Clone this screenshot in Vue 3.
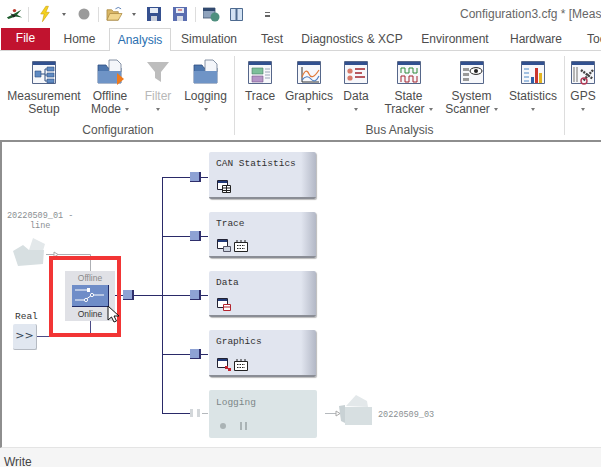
<template>
  <div class="app">
    <!-- quick access -->
    <div class="quick">
      <svg class="q" style="margin-left:6px" width="17" height="14" viewBox="0 0 20 16"><path d="M1 12 L9 8 L18 3 L13 9 L19 12 L11 11 L3 14Z" fill="#1d5c2c"/><path d="M5 7 L12 10 L9 12Z" fill="#222"/><circle cx="10" cy="4" r="2" fill="#b8372c"/></svg>
      <i class="sep" style="margin-left:5px"></i>
      <svg class="q" style="margin-left:10px" width="12" height="18" viewBox="0 0 14 20"><path d="M8 1 L2 10 H6 L4 19 L12 8 H8 L11 1Z" fill="#f5d21f" stroke="#c9a010" stroke-width=".7"/></svg>
      <i class="caret" style="margin-left:11px"></i>
      <svg class="q" style="margin-left:12px" width="12" height="12" viewBox="0 0 12 12"><circle cx="6" cy="6" r="5.5" fill="#9b9b9b"/></svg>
      <i class="sep" style="margin-left:8px"></i>
      <svg class="q" style="margin-left:7px" width="17" height="16" viewBox="0 0 18 17"><path d="M1 15 V4 H6 L8 6 H13 V15Z" fill="#d9b766" stroke="#a8873d" stroke-width=".8"/><path d="M1 15 L4 8 H17 L13 15Z" fill="#f1d68d" stroke="#a8873d" stroke-width=".8"/><path d="M10 3 Q13 0 16 3" fill="none" stroke="#5b7fb5"/></svg>
      <i class="caret" style="margin-left:9px"></i>
      <svg class="q" style="margin-left:11px" width="14" height="14" viewBox="0 0 14 14"><path d="M0 0 H14 V14 H0Z" fill="#35508f"/><path d="M3 1 H11 V6 H3Z" fill="#e6ecf5"/><path d="M4 9 H10 V14 H4Z" fill="#c9cfdc"/></svg>
      <svg class="q" style="margin-left:12px" width="14" height="14" viewBox="0 0 14 14"><path d="M0 0 H14 V14 H0Z" fill="#5a6db0"/><path d="M3 1 H11 V6 H3Z" fill="#e6ecf5"/><path d="M4 9 H10 V14 H4Z" fill="#d8dce6"/><path d="M5 3 H9" stroke="#c33"/></svg>
      <i class="sep" style="margin-left:8px"></i>
      <svg class="q" style="margin-left:7px" width="17" height="16" viewBox="0 0 17 16"><path d="M0 2 H12 V12 H0Z" fill="#8fa3bd" stroke="#3f5370" stroke-width=".8"/><path d="M0 2 H12 V5 H0Z" fill="#31496f"/><circle cx="12" cy="11" r="4.5" fill="#4f8f7f"/></svg>
      <svg class="q" style="margin-left:10px" width="13" height="13" viewBox="0 0 13 13"><path d="M.5 .5 H12.5 V12.5 H.5Z" fill="#d3e2f3" stroke="#4d6a8f"/><path d="M6.5 .5 V12.5" stroke="#4d6a8f" stroke-width="2"/></svg>
      <i class="more"></i>
      <span class="title">Configuration3.cfg * [Measu</span>
    </div>

    <!-- tabs -->
    <div class="tabs">
      <span class="file">File</span>
      <span
        v-for="tab in tabs"
        :key="tab.name"
        class="tab"
        :class="{ active: tab.active }"
        :style="{ width: tab.w + 'px' }"
      >{{ tab.name }}</span>
    </div>

    <!-- ribbon -->
    <div class="ribbon">
      <div v-for="group in groups" :key="group.name" class="group" :style="{ width: group.w + 'px' }">
        <div class="items">
          <div
            v-for="item in group.items"
            :key="item.label"
            class="item"
            :class="{ off: item.off }"
            :style="{ width: item.w + 'px' }"
          >
            <svg class="ricon" width="28" height="26" viewBox="0 0 28 26">
              <template v-if="item.icon === 'folder'">
                <path d="M2 6 H10 L12 9 H25 V24 H2Z" fill="#4d76ad" stroke="#2f4f80" stroke-width=".8"/>
                <path d="M13 1 H21 L25 5 V13 H13Z" fill="#f4f6fa" stroke="#6a7a90" stroke-width=".8"/>
                <path d="M2 12 H25 V24 H2Z" fill="#6f94c6"/>
                <path v-if="item.play" d="M21 14 L28 20 L21 26Z" fill="#ef7a1c"/>
              </template>
              <path v-else-if="item.icon === 'filter'" d="M3 3 H25 L17 13 V23 L11 19 V13Z" fill="#bdbdbd"/>
              <template v-else>
                <path d="M2.5 2.5 H25.5 V24.5 H2.5Z" fill="#f7f8fb" stroke="#56678a"/>
                <path d="M3 3 H25 V6 H3Z" fill="#31508f"/>
                <template v-if="item.icon === 'tree'">
                  <path d="M5 12 H11 V18 H5Z M17 8 H24 V12 H17Z M17 14 H24 V18 H17Z M17 20 H24 V24 H17Z" fill="#5f8ac2" stroke="#2f4f80" stroke-width=".6"/>
                  <path d="M11 15 H15 M15 10 V22 M15 10 H17 M15 16 H17 M15 22 H17" stroke="#2f4f80" fill="none"/>
                </template>
                <template v-else-if="item.icon === 'trace'">
                  <path d="M6 9 H17 V15 H6Z" fill="#7dbf9a" stroke="#4c7f68" stroke-width=".6"/>
                  <path d="M6 17 H17 V23 H6Z" fill="#b595c7" stroke="#75588a" stroke-width=".6"/>
                  <path d="M19 10 H24 M19 13 H24 M19 16 H24 M19 19 H24" stroke="#9aa5b8"/>
                </template>
                <template v-else-if="item.icon === 'graph'">
                  <path d="M7 8 V23 H24" stroke="#333" fill="none"/>
                  <path d="M7 18 Q11 8 14 15 T24 11" stroke="#e07a3a" fill="none" stroke-width="1.2"/>
                  <path d="M7 21 Q12 15 16 20 T24 17" stroke="#4f7fc0" fill="none" stroke-width="1.2"/>
                </template>
                <template v-else-if="item.icon === 'data'">
                  <circle cx="8" cy="12" r="2.6" fill="#d77a6a"/>
                  <circle cx="8" cy="19" r="2.6" fill="#d77a6a"/>
                  <path d="M13 10 H23 M13 14 H20 M13 18 H23" stroke="#a3242e" stroke-width="1.4"/>
                </template>
                <template v-else-if="item.icon === 'state'">
                  <path d="M6 14 V9 H10 V14 H14 V9 H18 V14 H22 V9" stroke="#2f8a3a" fill="none"/>
                  <path d="M6 23 V17 H10 V23 H14 V17 H18 V23 H22 V17" stroke="#a3242e" fill="none"/>
                </template>
                <template v-else-if="item.icon === 'scan'">
                  <path d="M5 9 H11 V12 H5Z M5 14 H11 V17 H5Z M5 19 H11 V22 H5Z" fill="#9a9a9a"/>
                  <ellipse cx="18" cy="12" rx="6" ry="3.4" fill="#fff" stroke="#222"/>
                  <circle cx="18" cy="12" r="2" fill="#222"/>
                </template>
                <template v-else-if="item.icon === 'stats'">
                  <path d="M5 10 H10 M5 14 H10 M5 18 H10 M5 22 H10" stroke="#4f8ac9"/>
                  <path d="M12 18 H15 V24 H12Z" fill="#2e5fa8"/>
                  <path d="M16 9 H19 V24 H16Z" fill="#c9352e"/>
                  <path d="M20 14 H23 V24 H20Z" fill="#e2b321"/>
                </template>
                <template v-else>
                  <path d="M5 8 V23 M8 8 V23" stroke="#b5b5b5" stroke-width="2"/>
                  <path d="M12 11 L24 20 M24 11 L14 22" stroke="#444" stroke-width="2.4" stroke-dasharray="2 1"/>
                  <circle cx="15" cy="22" r="3" fill="none" stroke="#b33a55" stroke-width="1.4"/>
                </template>
              </template>
            </svg>
            <span v-for="(line, i) in item.lines" :key="line" class="lab">
              {{ line }}<i v-if="item.inline && i === item.lines.length - 1" class="mini inl"></i>
            </span>
            <i v-if="item.drop" class="mini"></i>
          </div>
        </div>
        <div class="gname">{{ group.name }}</div>
      </div>
    </div>

    <!-- measurement setup -->
    <div class="canvas">
      <svg class="wires" width="601" height="308" viewBox="0 140 601 308">
        <path d="M162.5 177 V413.5" stroke="#2a2a68" fill="none"/>
        <path d="M162 177.5 H208 M162 236.5 H208 M162 295.5 H208 M162 354.5 H208 M115 295.5 H162" stroke="#2a2a68" fill="none"/>
        <path d="M162 413.5 H190" stroke="#2a2a68" fill="none"/>
        <path d="M200 413.5 H208 M325 413.5 H340" stroke="#b5b9bd" fill="none"/>
        <path d="M46 254.5 H90.5 V271" stroke="#aeb0b4" fill="none"/>
        <path d="M54 252 L58 254.5 L54 257Z" fill="#fff" stroke="#aaa"/>
        <path d="M35 336.5 H90.5 V320" stroke="#4c4c86" fill="none"/>
        <path d="M336 411 L340 413.5 L336 416Z" fill="#fff" stroke="#aaa"/>
      </svg>

      <div v-for="y in [172, 231, 290, 349]" :key="y" class="port" :style="{ top: (y - 142) + 'px' }"></div>
      <div class="port main"></div>
      <div class="port-off"><b></b><b></b></div>

      <div v-for="node in nodes" :key="node.name" class="node" :style="{ top: (node.y - 142) + 'px', height: node.h + 'px' }">
        <div class="nname">{{ node.name }}</div>
        <div class="nicons">
          <svg v-for="(ic, i) in node.icons" :key="i" width="14" height="13" viewBox="0 0 14 13">
            <template v-if="ic === 'kbd'">
              <path d="M.5 3.5 H13.5 V12.5 H.5Z M3 1 V3 M7 1 V3 M11 1 V3" fill="#fff" stroke="#222"/>
              <path d="M3 6.5 H11 M3 9.5 H11" stroke="#222" stroke-dasharray="1.5 1"/>
            </template>
            <template v-else>
              <path d="M.5 .5 H10.5 V9.5 H.5Z" fill="#fff" stroke="#223"/>
              <path d="M1 1 H10 V3 H1Z" fill="#223a78"/>
              <path v-if="ic === 'table'" d="M5.5 5.5 H13.5 V12.5 H5.5Z M5.5 8 H13.5 M5.5 10.5 H13.5 M9.5 5.5 V12.5" fill="#fff" stroke="#222"/>
              <path v-else-if="ic === 'win'" d="M6.5 7.5 H13.5 V12.5 H6.5Z" fill="#cfd6e2" stroke="#556"/>
              <path v-else-if="ic === 'red'" d="M6.5 6.5 H13.5 V12.5 H6.5Z M6.5 9 H13.5" fill="#fff" stroke="#b3242e"/>
              <path v-else d="M8 8 H11 V11 H8Z M11 10 H14 V13 H11Z" fill="#c3242e"/>
            </template>
          </svg>
        </div>
      </div>

      <div class="node logging">
        <div class="nname">Logging</div>
        <div class="lctl"><i class="dot"></i><i class="pause"></i></div>
      </div>

      <div class="fname fleft">20220509_01 -<br /><span>line</span></div>
      <svg class="folder f1" width="34" height="30" viewBox="0 0 34 30"><path d="M16 12 L20 0 L32 6 L29 16Z" fill="#e3e8ea"/><path d="M0 13 L10 7 L16 12 H31 L30 26 L5 28Z" fill="#d7dfe1"/></svg>
      <svg class="folder f2" width="34" height="30" viewBox="0 0 34 30"><path d="M7 11 L17 0 L28 6 L29 12Z" fill="#e3e8ea"/><path d="M0 11 L6 10 V28 L2 26Z" fill="#c9d2d5"/><path d="M6 12 H33 V30 H6Z" fill="#d7dfe1"/></svg>
      <div class="fname fright">20220509_03</div>

      <div class="real">Real</div>
      <div class="realbox">&gt;&gt;</div>

      <div class="switch">
        <span class="sw-t off">Offline</span>
        <div class="sw-blue">
          <svg width="36" height="21" viewBox="0 0 36 21">
            <path d="M3 5 H15" stroke="#fff"/><path d="M15 3 H18 V7 H15Z" fill="#fff"/>
            <path d="M3 15 H13 L20 10 H32" stroke="#fff" fill="none"/>
            <circle cx="20" cy="10" r="1.6" fill="#5f7fbd" stroke="#fff"/><circle cx="14" cy="15" r="1.6" fill="#5f7fbd" stroke="#fff"/>
          </svg>
        </div>
        <span class="sw-t">Online</span>
      </div>
      <div class="redbox"></div>
      <svg class="cursor" width="13" height="18" viewBox="0 0 13 18"><path d="M1 1 V15 L4.5 12 L7 17 L9.5 16 L7 11 L12 11Z" fill="#fff" stroke="#111"/></svg>
    </div>

    <div class="status">Write</div>
  </div>
</template>

<script setup>
const tabs = [
  { name: 'Home', w: 59 },
  { name: 'Analysis', w: 62, active: true },
  { name: 'Simulation', w: 76 },
  { name: 'Test', w: 50 },
  { name: 'Diagnostics & XCP', w: 110 },
  { name: 'Environment', w: 96 },
  { name: 'Hardware', w: 66 },
  { name: 'Tools', w: 64 }
]

const groups = [
  {
    name: 'Configuration',
    w: 233,
    items: [
      { label: 'Measurement', lines: ['Measurement', 'Setup'], icon: 'tree', w: 84 },
      { label: 'Offline', lines: ['Offline', 'Mode'], inline: true, icon: 'folder', play: true, w: 48 },
      { label: 'Filter', lines: ['Filter'], icon: 'filter', off: true, drop: true, w: 48 },
      { label: 'Logging', lines: ['Logging'], icon: 'folder', drop: true, w: 47 }
    ]
  },
  {
    name: 'Bus Analysis',
    w: 330,
    items: [
      { label: 'Trace', lines: ['Trace'], icon: 'trace', drop: true, w: 50 },
      { label: 'Graphics', lines: ['Graphics'], icon: 'graph', drop: true, w: 48 },
      { label: 'Data', lines: ['Data'], icon: 'data', drop: true, w: 46 },
      { label: 'State', lines: ['State', 'Tracker'], inline: true, icon: 'state', w: 59 },
      { label: 'System', lines: ['System', 'Scanner'], inline: true, icon: 'scan', w: 67 },
      { label: 'Statistics', lines: ['Statistics'], icon: 'stats', drop: true, w: 56 }
    ]
  },
  {
    name: '',
    w: 36,
    items: [{ label: 'GPS', lines: ['GPS'], icon: 'gps', drop: true, w: 36 }]
  }
]

const nodes = [
  { name: 'CAN Statistics', y: 152, h: 47, icons: ['table'] },
  { name: 'Trace', y: 212, h: 46, icons: ['win', 'kbd'] },
  { name: 'Data', y: 271, h: 46, icons: ['red'] },
  { name: 'Graphics', y: 330, h: 47, icons: ['graph', 'kbd'] }
]
</script>

<style>
html, body { margin: 0; background: #fff; overflow: hidden; }
</style>

<style scoped>
.app {
  width: 601px;
  height: 467px;
  display: flex;
  flex-direction: column;
  overflow: hidden;
  font-family: "Liberation Sans", sans-serif;
  font-size: 12px;
  color: #4d4d4d;
  background: #fff;
}

.quick {
  height: 28px;
  display: flex;
  align-items: center;
  flex: none;
  position: relative;
}
.q { flex: none; }
.sep { width: 1px; height: 15px; background: #ddd; flex: none; }
.caret {
  width: 0; height: 0; flex: none;
  border-left: 2.5px solid transparent;
  border-right: 2.5px solid transparent;
  border-top: 3px solid #666;
}
.more {
  width: 5px; height: 4px; margin-left: 22px; flex: none;
  border-top: 1px solid #666;
  box-shadow: inset 0 -3px 0 -1px #666;
}
.title {
  margin-left: auto;
  white-space: nowrap;
  font-size: 12px;
  color: #666;
  width: 141px;
  overflow: hidden;
}

.tabs {
  height: 22px;
  display: flex;
  flex: none;
  border-bottom: 1px solid #d6d6d6;
  box-sizing: content-box;
  padding-left: 1px;
}
.file {
  width: 49px;
  background: #c1132f;
  color: #fff;
  text-align: center;
  line-height: 21px;
  flex: none;
}
.tab {
  flex: none;
  text-align: center;
  line-height: 22px;
  white-space: nowrap;
  color: #4d4d4d;
  box-sizing: border-box;
}
.tab:first-of-type { text-indent: 3px; }
.tab.active {
  color: #2a6fb0;
  background: #fff;
  border: 1px solid #d6d6d6;
  border-bottom: 0;
  height: 23px;
}

.ribbon {
  height: 89px;
  flex: none;
  display: flex;
  padding-left: 2px;
  box-sizing: border-box;
}
.group {
  flex: none;
  display: flex;
  flex-direction: column;
  border-right: 1px solid #ddd;
  margin: 5px 0;
  box-sizing: border-box;
  height: 79px;
}
.group:last-child { border-right: 0; }
.items { display: flex; height: 66px; flex: none; }
.item {
  flex: none;
  display: flex;
  flex-direction: column;
  align-items: center;
  line-height: 13px;
  white-space: nowrap;
}
.ricon { margin-top: 3px; margin-bottom: 5px; flex: none; }
.lab { font-size: 12px; display: block; }
.item.off { color: #b8b8b8; }
.mini {
  display: block;
  width: 0; height: 0; margin-top: 5px;
  border-left: 2px solid transparent;
  border-right: 2px solid transparent;
  border-top: 3px solid #777;
}
.mini.inl { display: inline-block; margin: 0 0 2px 4px; }
.gname { text-align: center; line-height: 13px; margin-top: 2px; color: #555; }

.canvas {
  flex: none;
  height: 308px;
  position: relative;
  border-top: 2px solid #8e8e8e;
  box-sizing: border-box;
  background: #fff;
  border-left: 2px solid #8e8e8e;
  border-bottom: 1px solid #e4e4e4;
}
.wires { position: absolute; left: -2px; top: -2px; }

.port {
  position: absolute;
  left: 188px;
  width: 9px;
  height: 9px;
  background: #8ea2d4;
  border-right: 2px solid #2f2f6c;
  border-bottom: 1px solid #2f2f6c;
}
.port.main { left: 121px; top: 148px; }
.port-off {
  position: absolute;
  left: 188px;
  top: 267px;
  width: 12px;
  display: flex;
  gap: 4px;
  background: #fff;
}
.port-off b { width: 3px; height: 8px; background: #d3d7da; }

.node {
  position: absolute;
  left: 207px;
  width: 107px;
  box-sizing: border-box;
  padding: 7px 0 0 7px;
  background: linear-gradient(90deg, #e1e5ef 0, #e1e5ef 86%, #b3b8c6 100%);
  border-bottom: 2px solid #8a8d95;
  border-radius: 2px;
  box-shadow: 1px 1px 1px #bbb;
}
.nname {
  font-family: "Liberation Mono", monospace;
  font-size: 9.5px;
  line-height: 10px;
  color: #333;
}
.nicons {
  position: absolute;
  left: 8px;
  bottom: 4px;
  display: flex;
}
.nicons svg { margin-right: 3px; }
.logging {
  top: 248px;
  height: 48px;
  width: 108px;
  background: #dbe4e6;
  border: 0;
  box-shadow: none;
  padding-top: 8px;
}
.logging .nname { color: #7b8688; }
.lctl { display: flex; align-items: center; gap: 14px; margin-top: 14px; padding-left: 4px; }
.dot { width: 6px; height: 6px; border-radius: 50%; background: #aab3b5; }
.pause { width: 7px; height: 8px; border-left: 2px solid #aab3b5; border-right: 2px solid #aab3b5; box-sizing: border-box; }

.folder { position: absolute; }
.f1 { left: 11px; top: 96px; }
.f2 { left: 337px; top: 253px; }
.fname {
  position: absolute;
  font-family: "Liberation Mono", monospace;
  font-size: 8.5px;
  line-height: 10px;
  color: #8a8f92;
  white-space: nowrap;
}
.fname span { margin-left: 23px; }
.fleft { left: 5px; top: 69px; }
.fright { left: 376px; top: 268px; }

.real {
  position: absolute;
  left: 13px;
  top: 170px;
  font-family: "Liberation Mono", monospace;
  font-size: 9.5px;
  line-height: 10px;
  color: #333;
}
.realbox {
  position: absolute;
  left: 11px;
  top: 182px;
  width: 23px;
  height: 25px;
  background: #e1e7f0;
  border-right: 1px solid #b5bac2;
  border-bottom: 1px solid #b5bac2;
  border-radius: 2px;
  text-align: center;
  line-height: 23px;
  font-size: 11px;
  color: #345;
  font-family: "DejaVu Sans", sans-serif;
}

.switch {
  position: absolute;
  left: 63px;
  top: 129px;
  width: 50px;
  height: 50px;
  background: #e0e1e6;
  display: flex;
  flex-direction: column;
  align-items: center;
  justify-content: space-between;
  padding: 1px 0;
  box-sizing: border-box;
  font-family: "Liberation Sans", sans-serif;
}
.sw-t { font-size: 8.5px; line-height: 12px; color: #333; }
.sw-t.off { color: #8a8a8a; }
.sw-blue {
  width: 36px;
  height: 21px;
  background: #6f8dc8;
  border-right: 1px solid #1f2a66;
  border-bottom: 1px solid #1f2a66;
  display: flex;
}
.redbox {
  position: absolute;
  left: 47px;
  top: 114px;
  width: 72px;
  height: 81px;
  box-sizing: border-box;
  border: 4px solid #f23535;
}
.cursor { position: absolute; left: 105px; top: 163px; }

.status {
  flex: 1;
  background: #f5f5f5;
  padding: 8px 0 0 4px;
  font-size: 12px;
  line-height: 12px;
  color: #444;
  overflow: hidden;
}
</style>
